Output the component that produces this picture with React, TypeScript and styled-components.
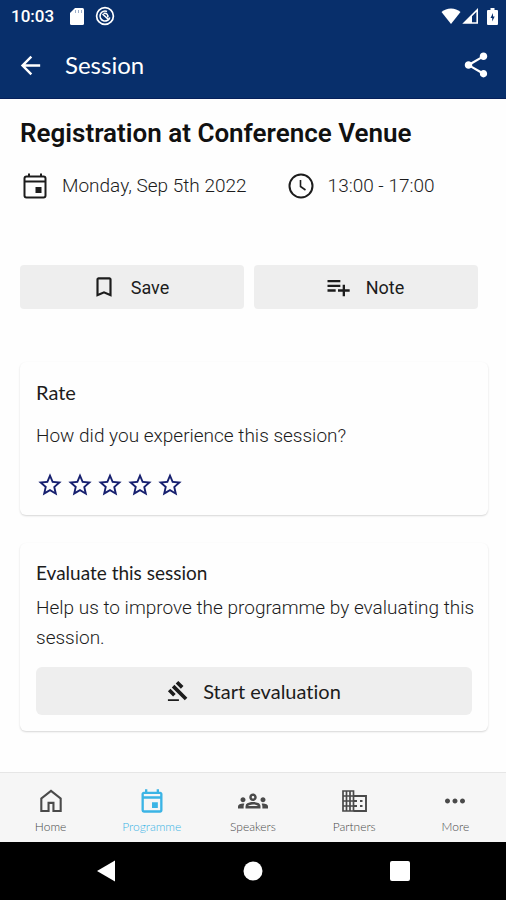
import React from 'react';
import styled, { createGlobalStyle } from 'styled-components';
import {
  MdArrowBack,
  MdBookmarkBorder,
  MdGavel,
  MdMoreHoriz,
  MdOutlineEvent,
  MdOutlineGroups,
  MdPlaylistAdd,
  MdShare,
  MdStarBorder,
} from 'react-icons/md';

const body = 'Roboto, "Liberation Sans", sans-serif';
const display = 'Lato, "Open Sans", sans-serif';

const GlobalStyle = createGlobalStyle`
  *, *::before, *::after { box-sizing: border-box; }
  body {
    margin: 0;
    background: #fefefe;
    color: #1c1c1c;
    font-family: ${body};
    font-variant-ligatures: none;
  }
  h1, h2, p { margin: 0; }
  button { border: 0; padding: 0; font: inherit; color: inherit; cursor: pointer; }
`;

const Page = styled.div`
  display: flex;
  flex-direction: column;
  min-height: 100vh;
`;

const TopArea = styled.header`
  background: #082f6b;
  border-bottom: 1px solid #06205a;
  color: #fff;
`;

const StatusBar = styled.div`
  display: flex;
  align-items: center;
  justify-content: space-between;
  height: 32px;
  padding: 0 8px 0 11px;
  font-size: 17px;
  font-weight: 500;
`;

const StatusGroup = styled.div<{ $gap: number }>`
  display: flex;
  align-items: center;
  gap: ${(p) => p.$gap}px;
`;

const Clock = styled.span`
  margin-right: 5px;
`;

const BatterySlot = styled.span`
  display: flex;
  padding-left: 7px;
`;

const AppBar = styled.div`
  display: flex;
  align-items: center;
  height: 66px;
  padding: 0 15px 0 16px;
`;

const AppTitle = styled.div`
  flex: 1;
  padding-left: 20px;
  font-family: ${display};
  font-size: 24px;
  line-height: 32px;
`;

const IconButton = styled.button`
  display: flex;
  background: none;
`;

const Content = styled.main`
  flex: 1;
  padding: 19px 18px 39px 20px;
`;

const Title = styled.h1`
  font-size: 26px;
  font-weight: 600;
  line-height: 30px;
  color: #111;
`;

const Meta = styled.div`
  display: flex;
  flex-wrap: wrap;
  gap: 16px 39px;
  margin-top: 23px;
`;

const MetaItem = styled.div`
  display: flex;
  align-items: center;
  gap: 12px;
  font-size: 19px;
  font-weight: 300;
  line-height: 30px;
`;

const Actions = styled.div`
  display: grid;
  grid-template-columns: 1fr 1fr;
  gap: 10px;
  margin: 64px 10px 53px 0;
`;

const GreyButton = styled.button<{ $tall?: boolean }>`
  display: flex;
  align-items: center;
  justify-content: center;
  gap: 14px;
  width: 100%;
  height: ${(p) => (p.$tall ? 48 : 44)}px;
  border-radius: ${(p) => (p.$tall ? 6 : 4)}px;
  background: #eee;
  && {
    padding-right: ${(p) => (p.$tall ? 0 : 4)}px;
    font-family: ${(p) => (p.$tall ? display : body)};
    font-size: ${(p) => (p.$tall ? 20 : 18)}px;
  }
`;

const Card = styled.section`
  padding: 16px;
  border-radius: 6px;
  background: #fefefe;
  box-shadow: 0 1px 2px rgba(0, 0, 0, 0.16);

  & + & {
    margin-top: 28px;
  }
`;

const CardTitle = styled.h2<{ $small?: boolean }>`
  font-family: ${display};
  font-size: ${(p) => (p.$small ? 19 : 20)}px;
  font-weight: 400;
  line-height: 28px;
`;

const CardText = styled.p`
  font-size: 19px;
  font-weight: 300;
  line-height: 30px;
`;

const Question = styled(CardText)`
  margin: 15px 0 20px;
`;

const EvaluationText = styled(CardText)`
  margin: 6px -8px 14px 0;
`;

const Stars = styled.div`
  display: flex;
  gap: 2px;
  color: #17206f;
`;

const Star = styled.label`
  display: flex;
  cursor: pointer;

  input {
    appearance: none;
    width: 0;
    height: 0;
    margin: 0;
  }
`;

const TabBar = styled.nav`
  display: grid;
  grid-template-columns: repeat(5, 1fr);
  height: 70px;
  border-top: 1px solid #e6e6e6;
  background: #f6f6f6;
`;

const Tab = styled.a<{ $active?: boolean }>`
  display: flex;
  flex-direction: column;
  align-items: center;
  padding-top: 14px;
  gap: 4px;
  color: ${(p) => (p.$active ? '#3bb4e5' : '#4a4a4a')};
  font-family: ${display};
  font-size: 12px;
  font-weight: 300;
  line-height: 16px;
  text-decoration: none;
`;

const TabIcon = styled.span`
  display: flex;
  align-items: center;
  height: 28px;
`;

const SystemBar = styled.div`
  display: grid;
  grid-template-columns: repeat(3, 1fr);
  align-items: center;
  justify-items: center;
  height: 58px;
  padding: 0 33px;
  background: #000;
`;

const SystemButton = styled.button`
  display: flex;
  background: none;
`;

const SdCard = () => (
  <svg width="14" height="17" viewBox="0 0 14 17" fill="#fff" aria-hidden="true">
    <path d="M5 0h7.500Q14 0 14 1.500v14Q14 17 12.500 17h-11Q0 17 0 15.500V5z" />
    <path d="M5.500 2v3M8.500 2v3M11.500 2v3" stroke="#9eafc9" strokeWidth="1" />
  </svg>
);

const Target = () => (
  <svg width="20" height="20" viewBox="0 0 20 20" fill="none" stroke="#fff" aria-hidden="true">
    <circle cx="10" cy="10" r="8.400" strokeWidth="1.700" />
    <path d="M14.800 11.500A5 5 0 1 1 12 5.400" strokeWidth="1.600" />
    <path d="M7.500 8l6.500 6" strokeWidth="1.600" />
    <path d="M8.500 7.500A3 3 0 0 1 12.500 11.500" strokeWidth="1.500" />
  </svg>
);

const Wifi = () => (
  <svg width="20" height="16" viewBox="0 0 20 16" fill="#fff" aria-hidden="true">
    <path d="M10 16L.5 4Q4.500 .5 10 .5T19.500 4z" />
  </svg>
);

const Signal = () => (
  <svg width="17" height="16" viewBox="0 0 17 16" aria-hidden="true">
    <path d="M15.200 2v13H2.200z" fill="none" stroke="#fff" strokeWidth="1.600" />
    <path d="M10 7v8H2z" fill="#fff" />
  </svg>
);

const Battery = () => (
  <svg width="11" height="17" viewBox="0 0 11 17" aria-hidden="true">
    <path d="M3.500 0h4v2H10q1 0 1 1v13q0 1-1 1H1q-1 0-1-1V3q0-1 1-1h2.500z" fill="#fff" />
    <path d="M6 5L3.500 10h1.700V13.500L7.700 8.500H6z" fill="#082f6b" />
  </svg>
);

const CalendarIcon = () => (
  <svg width="30" height="30" viewBox="0 0 30 30" fill="none" stroke="currentColor" aria-hidden="true">
    <rect x="4.500" y="5.500" width="21" height="21" rx="2" strokeWidth="2" />
    <path d="M4.500 10.500h21" strokeWidth="2" />
    <path d="M9 2.500v3M21 2.500v3" strokeWidth="2" />
    <rect x="15.500" y="16" width="6" height="6" fill="currentColor" stroke="none" />
  </svg>
);

const ClockIcon = () => (
  <svg width="30" height="30" viewBox="0 0 30 30" fill="none" stroke="currentColor" aria-hidden="true">
    <circle cx="15" cy="15" r="11.500" strokeWidth="2" />
    <path d="M14.500 9v6.500l5 3.500" strokeWidth="1.600" />
  </svg>
);

const HomeIcon = () => (
  <svg width="28" height="28" viewBox="0 0 24 24" fill="currentColor" aria-hidden="true">
    <path d="M12 2.200L2.800 9.400V21.500H10.800V14.500h2.400v7h8V9.400zM4.600 10.200L12 4.500l7.400 5.700v9.500H15v-7H9v7H4.600z" />
  </svg>
);

const BuildingIcon = () => (
  <svg width="28" height="28" viewBox="0 0 28 28" fill="none" stroke="currentColor" aria-hidden="true">
    <path d="M3 4h10.500v20H3zM6.500 4v20M10 4v20M3 9h10.500M3 14h10.500M3 19h10.500" strokeWidth="1.700" />
    <path d="M13.500 9H26v15H13.500" strokeWidth="1.900" />
    <path d="M14 14h3M14 19h3M20 14h2.500M20 19h2.500" strokeWidth="2" />
  </svg>
);

const tabs = [
  { label: 'Home', icon: <HomeIcon /> },
  { label: 'Programme', icon: <MdOutlineEvent size={28} />, active: true },
  { label: 'Speakers', icon: <MdOutlineGroups size={30} /> },
  { label: 'Partners', icon: <BuildingIcon /> },
  { label: 'More', icon: <MdMoreHoriz size={30} /> },
];

export default function App() {
  return (
    <Page>
      <GlobalStyle />
      <TopArea>
        <StatusBar>
          <StatusGroup $gap={11}>
            <Clock>10:03</Clock>
            <SdCard />
            <Target />
          </StatusGroup>
          <StatusGroup $gap={1}>
            <Wifi />
            <Signal />
            <BatterySlot>
              <Battery />
            </BatterySlot>
          </StatusGroup>
        </StatusBar>
        <AppBar>
          <IconButton aria-label="Back">
            <MdArrowBack size={29} />
          </IconButton>
          <AppTitle>Session</AppTitle>
          <IconButton aria-label="Share">
            <MdShare size={30} />
          </IconButton>
        </AppBar>
      </TopArea>

      <Content>
        <Title>Registration at Conference Venue</Title>
        <Meta>
          <MetaItem>
            <CalendarIcon />
            Monday, Sep 5th 2022
          </MetaItem>
          <MetaItem>
            <ClockIcon />
            13:00 - 17:00
          </MetaItem>
        </Meta>

        <Actions>
          <GreyButton>
            <MdBookmarkBorder size={26} />
            Save
          </GreyButton>
          <GreyButton>
            <MdPlaylistAdd size={28} />
            Note
          </GreyButton>
        </Actions>

        <Card>
          <CardTitle>Rate</CardTitle>
          <Question id="rate-question">How did you experience this session?</Question>
          <Stars role="radiogroup" aria-labelledby="rate-question">
            {[1, 2, 3, 4, 5].map((n) => (
              <Star key={n}>
                <input type="radio" name="rating" value={n} aria-label={`${n} stars`} />
                <MdStarBorder size={28} />
              </Star>
            ))}
          </Stars>
        </Card>

        <Card>
          <CardTitle $small>Evaluate this session</CardTitle>
          <EvaluationText>
            Help us to improve the programme by evaluating this session.
          </EvaluationText>
          <GreyButton $tall>
            <MdGavel size={22} />
            Start evaluation
          </GreyButton>
        </Card>
      </Content>

      <TabBar>
        {tabs.map((tab) => (
          <Tab key={tab.label} href="#" $active={tab.active}>
            <TabIcon>{tab.icon}</TabIcon>
            <span>{tab.label}</span>
          </Tab>
        ))}
      </TabBar>

      <SystemBar>
        <SystemButton aria-label="System back">
          <svg width="20" height="22" viewBox="0 0 20 22" fill="#fff">
            <path d="M19 .5v21L1 11z" />
          </svg>
        </SystemButton>
        <SystemButton aria-label="System home">
          <svg width="20" height="20" viewBox="0 0 20 20" fill="#fff">
            <circle cx="10" cy="10" r="9.500" />
          </svg>
        </SystemButton>
        <SystemButton aria-label="Recent apps">
          <svg width="20" height="20" viewBox="0 0 20 20" fill="#fff">
            <rect width="20" height="20" rx="2" />
          </svg>
        </SystemButton>
      </SystemBar>
    </Page>
  );
}
